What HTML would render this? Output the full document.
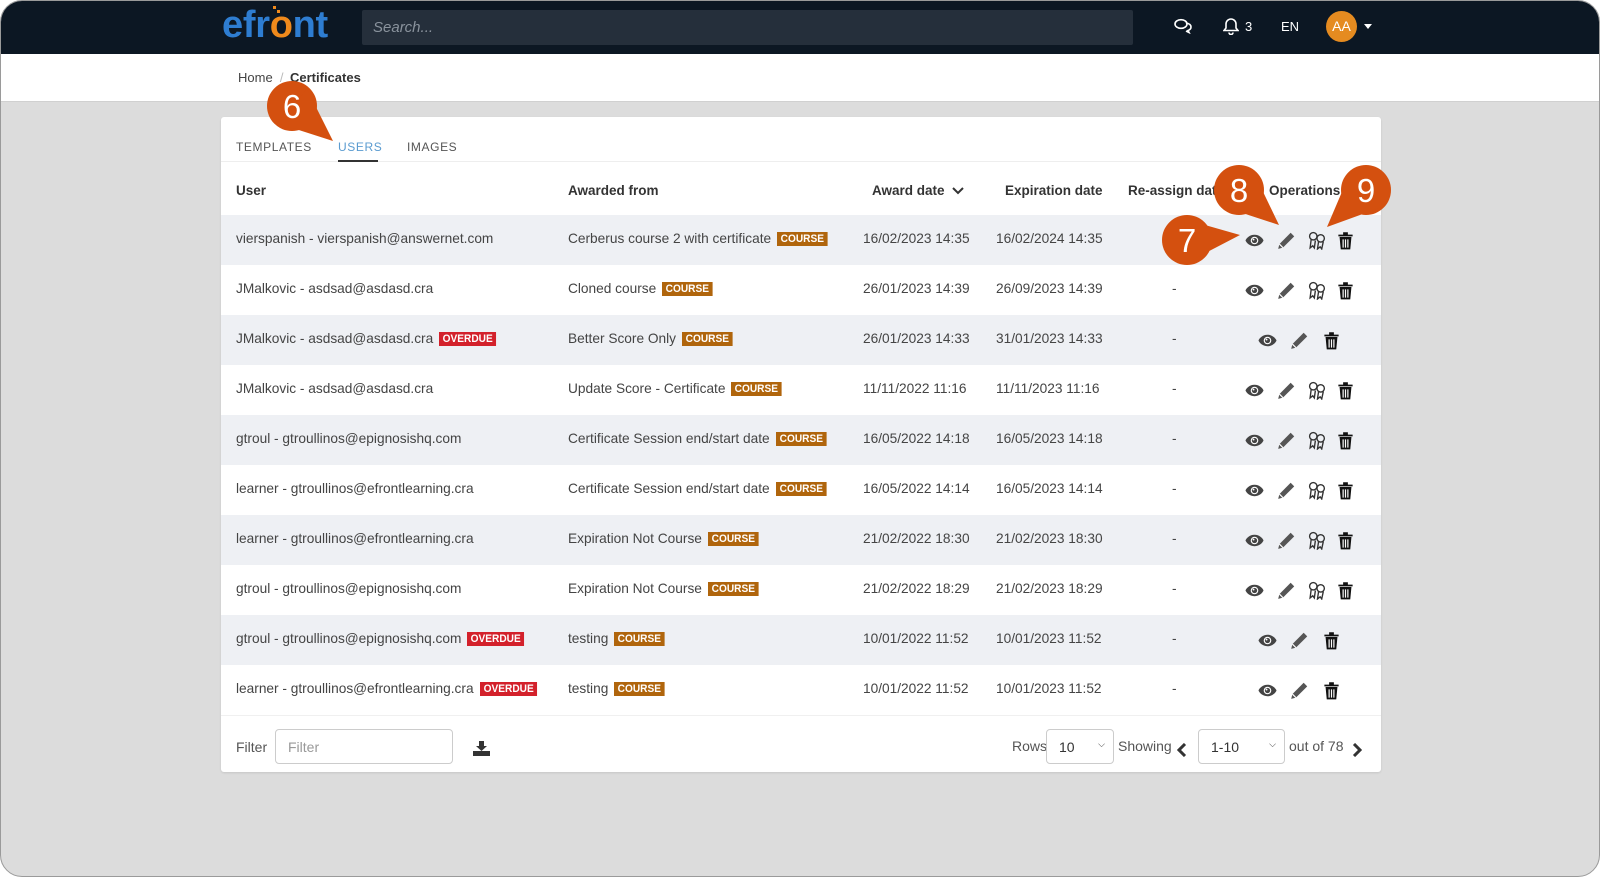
<!DOCTYPE html>
<html><head><meta charset="utf-8">
<style>
*{box-sizing:border-box;margin:0;padding:0}
body{width:1600px;height:877px;background:#fff;font-family:"Liberation Sans",sans-serif;overflow:hidden;position:relative}
.frame{position:absolute;left:0;top:0;width:1600px;height:877px;background:#dcdcdc;border:1px solid #9a9a9a;border-radius:22px;overflow:hidden}
.nav{position:absolute;left:0;top:0;width:1600px;height:53px;background:#0c1723}
.logo{position:absolute;left:221px;top:3px;font-size:38px;font-weight:bold;color:#2e7dd1;letter-spacing:-0.3px}
.logo b{color:#f08a1c}
.search{position:absolute;left:361px;top:9px;width:771px;height:35px;background:#252f3b;border-radius:2px;color:#8a939d;font-style:italic;font-size:15px;padding:9px 11px}
.crumb{position:absolute;left:0;top:53px;width:1600px;height:48px;background:#fff;border-bottom:1px solid #d0d0d0}
.crumb span{position:absolute;top:16px;font-size:13px}
.card{position:absolute;left:220px;top:116px;width:1160px;height:655px;background:#fff;border-radius:3px;box-shadow:0 1px 2px rgba(0,0,0,.1)}
.tab{position:absolute;top:23px;font-size:12px;letter-spacing:0.6px;color:#555}
.abs{position:absolute;white-space:nowrap}
.row{position:absolute;left:0;width:1160px;height:50px;font-size:13.7px;color:#444}
.row.g{background:#eef0f4}
.row .abs{top:16px}
.bd{display:inline-block;font-size:11px;color:#fff;padding:1px 4px;margin-left:6px;vertical-align:1px;font-weight:bold;transform:scaleX(.92);transform-origin:left}
.c{background:#b0650c}.o{background:#d3212b}
.ic{position:absolute;top:16px;width:19px;height:19px}
.sel{position:absolute;top:612px;height:35px;border:1px solid #ccc;border-radius:4px;font-size:14px;padding:9px 12px;color:#333;background:#fff}
</style></head><body>
<svg width="0" height="0" style="position:absolute">
<symbol id="eye" viewBox="0 0 20 14"><path d="M10 1C5 1 1.5 4.5 0.5 7c1 2.5 4.5 6 9.5 6s8.5-3.5 9.5-6C18.5 4.5 15 1 10 1z" fill="#444"/><circle cx="10" cy="7" r="4" fill="#fff"/><circle cx="10" cy="7" r="2.8" fill="#444"/><circle cx="9" cy="6" r="1" fill="#fff"/></symbol>
<symbol id="pen" viewBox="0 0 16 16"><path d="M11.5 1.5l3 3L5 14l-4 1 1-4z" fill="#555"/><path d="M2 11l3 3" stroke="#fff" stroke-width="1"/></symbol>
<symbol id="rib" viewBox="0 0 18 18"><g fill="none" stroke="#333" stroke-width="1.3"><circle cx="5" cy="5" r="3.5"/><circle cx="12" cy="7" r="3.5"/><path d="M3 8l-1 8 2.5-2 1.5 2 1-7M10 10l-1 7 2.5-2 1.5 2 1.5-7"/></g></symbol>
<symbol id="tr" viewBox="0 0 14 16"><path d="M1 3h12v1.5H1zM5 1h4v2H5zM2 5h10l-1 10.5H3z" fill="#111"/><path d="M5 7v7M7 7v7M9 7v7" stroke="#fff" stroke-width="1"/></symbol>
</svg>
<div class="frame">
<div class="nav">
 <div class="logo">efr<b>o</b>nt</div>
 <div class="abs" style="left:272px;top:5px;width:3px;height:3px;background:#f08a1c"></div>
 <div class="abs" style="left:276px;top:9px;width:3px;height:3px;background:#f08a1c"></div>
 <div class="search">Search...</div>
 <svg class="abs" style="left:1173px;top:17px" width="18" height="16" viewBox="0 0 18 16"><g fill="none" stroke="#fff" stroke-width="1.6"><ellipse cx="7" cy="6" rx="6" ry="4.3"/><path d="M12 5c3 .5 5 2 5 4s-1.5 3-3 3.5l1 2-3-1.5"/></g></svg>
 <svg class="abs" style="left:1222px;top:16px" width="16" height="18" viewBox="0 0 16 18"><path d="M8 2c-3 0-5 2.5-5 5v4l-2 2.5h14L13 11V7c0-2.5-2-5-5-5zM6 15.5a2 2 0 004 0" fill="none" stroke="#fff" stroke-width="1.6"/></svg>
 <div class="abs" style="left:1244px;top:18px;color:#fff;font-size:13px">3</div>
 <div class="abs" style="left:1280px;top:18px;color:#fff;font-size:13px">EN</div>
 <div class="abs" style="left:1325px;top:10px;width:31px;height:31px;border-radius:50%;background:#e58b20;color:#fff;font-size:14px;text-align:center;line-height:31px">AA</div>
 <div class="abs" style="left:1363px;top:23px;border:4px solid transparent;border-top:5px solid #fff"></div>
</div>
<div class="crumb">
 <span style="left:237px;color:#444">Home <span style="position:static;color:#bbb">&nbsp;/</span></span>
 <span style="left:289px;color:#333;font-weight:bold">Certificates</span>
</div>
<div class="card">
 <div class="tab" style="left:15px">TEMPLATES</div>
 <div class="tab" style="left:117px;color:#5a9bd0">USERS</div>
 <div class="tab" style="left:186px">IMAGES</div>
 <div class="abs" style="left:0;top:44px;width:1160px;height:1px;background:#eee"></div>
 <div class="abs" style="left:117px;top:43px;width:40px;height:2px;background:#333"></div>
 <div class="row" style="top:48px;font-weight:bold;color:#333;font-size:13.5px">
  <div class="abs" style="left:15px;top:18px">User</div>
  <div class="abs" style="left:347px;top:18px">Awarded from</div>
  <div class="abs" style="left:651px;top:18px">Award date <svg width="12" height="9" style="margin-left:4px" viewBox="0 0 12 9"><path d="M1 2l5 5 5-5" fill="none" stroke="#333" stroke-width="2"/></svg></div>
  <div class="abs" style="left:784px;top:18px">Expiration date</div>
  <div class="abs" style="left:907px;top:18px">Re-assign date</div>
  <div class="abs" style="left:1048px;top:18px">Operations</div>
 </div>
 <div id="rows"></div>
 <div class="abs" style="left:0;top:598px;width:1160px;height:1px;background:#f0f0f0"></div>
 <div class="abs" style="left:15px;top:622px;font-size:14px;color:#555">Filter</div>
 <div class="abs" style="left:54px;top:612px;width:178px;height:35px;border:1px solid #ccc;border-radius:4px;font-size:14px;color:#999;padding:9px 12px">Filter</div>
 <svg class="abs" style="left:252px;top:624px" width="17" height="15" viewBox="0 0 17 15"><path d="M6 0h5v5h3l-5.5 5L3 5h3zM0 10h17v5H0z" fill="#333"/></svg>
 <div class="abs" style="left:791px;top:621px;font-size:14px;color:#555">Rows</div>
 <div class="sel" style="left:825px;width:68px">10<span style="position:absolute;right:8px;font-size:9px">&#9013;</span></div>
 <div class="abs" style="left:897px;top:621px;font-size:14px;color:#555">Showing</div>
 <svg class="abs" style="left:956px;top:626px" width="10" height="14" viewBox="0 0 10 14"><path d="M8 1L2 7l6 6" fill="none" stroke="#333" stroke-width="3"/></svg>
 <div class="sel" style="left:977px;width:87px">1-10<span style="position:absolute;right:8px;font-size:9px">&#9013;</span></div>
 <div class="abs" style="left:1068px;top:621px;font-size:14px;color:#555">out of 78</div>
 <svg class="abs" style="left:1131px;top:626px" width="10" height="14" viewBox="0 0 10 14"><path d="M2 1l6 6-6 6" fill="none" stroke="#333" stroke-width="3"/></svg>
</div>
<svg class="abs" style="left:0;top:0" width="1600" height="877" viewBox="0 0 1600 877">
 <g fill="#d4500f">
  <circle cx="291" cy="105" r="25"/><polygon points="276,122 306,88 332,140"/>
  <circle cx="1186" cy="239" r="25"/><polygon points="1189,260 1183,218 1239,234"/>
  <circle cx="1238" cy="189" r="25"/><polygon points="1223,206 1253,172 1278,224"/>
  <circle cx="1365" cy="189" r="25"/><polygon points="1381,206 1349,172 1326,226"/>
 </g>
 <g fill="#fff" font-family="Liberation Sans, sans-serif" font-size="33" text-anchor="middle">
  <text x="291" y="117">6</text><text x="1186" y="251">7</text><text x="1238" y="201">8</text><text x="1365" y="201">9</text>
 </g>
</svg>
</div>
<script>
var d=[
["vierspanish - vierspanish@answernet.com","","Cerberus course 2 with certificate","16/02/2023 14:35","16/02/2024 14:35","",1],
["JMalkovic - asdsad@asdasd.cra","","Cloned course","26/01/2023 14:39","26/09/2023 14:39","-",1],
["JMalkovic - asdsad@asdasd.cra","o","Better Score Only","26/01/2023 14:33","31/01/2023 14:33","-",0],
["JMalkovic - asdsad@asdasd.cra","","Update Score - Certificate","11/11/2022 11:16","11/11/2023 11:16","-",1],
["gtroul - gtroullinos@epignosishq.com","","Certificate Session end/start date","16/05/2022 14:18","16/05/2023 14:18","-",1],
["learner - gtroullinos@efrontlearning.cra","","Certificate Session end/start date","16/05/2022 14:14","16/05/2023 14:14","-",1],
["learner - gtroullinos@efrontlearning.cra","","Expiration Not Course","21/02/2022 18:30","21/02/2023 18:30","-",1],
["gtroul - gtroullinos@epignosishq.com","","Expiration Not Course","21/02/2022 18:29","21/02/2023 18:29","-",1],
["gtroul - gtroullinos@epignosishq.com","o","testing","10/01/2022 11:52","10/01/2023 11:52","-",0],
["learner - gtroullinos@efrontlearning.cra","o","testing","10/01/2022 11:52","10/01/2023 11:52","-",0]];
var h="";
d.forEach(function(r,i){
 h+='<div class="row'+(i%2==0?' g':'')+'" style="top:'+(98+i*50)+'px">';
 h+='<div class="abs" style="left:15px">'+r[0]+(r[1]?'<span class="bd o">OVERDUE</span>':'')+'</div>';
 h+='<div class="abs" style="left:347px">'+r[2]+'<span class="bd c">COURSE</span></div>';
 h+='<div class="abs" style="left:642px">'+r[3]+'</div><div class="abs" style="left:775px">'+r[4]+'</div>';
 h+='<div class="abs" style="left:951px">'+r[5]+'</div>';
 var xs=r[6]?[1024,1056,1087,1115]:[1037,1069,1101];
 var ids=r[6]?['eye','pen','rib','tr']:['eye','pen','tr'];
 ids.forEach(function(s,j){h+='<svg class="ic" style="left:'+xs[j]+'px"><use href="#'+s+'"/></svg>';});
 h+='</div>';
});
document.getElementById('rows').innerHTML=h;
</script>
</body></html>
